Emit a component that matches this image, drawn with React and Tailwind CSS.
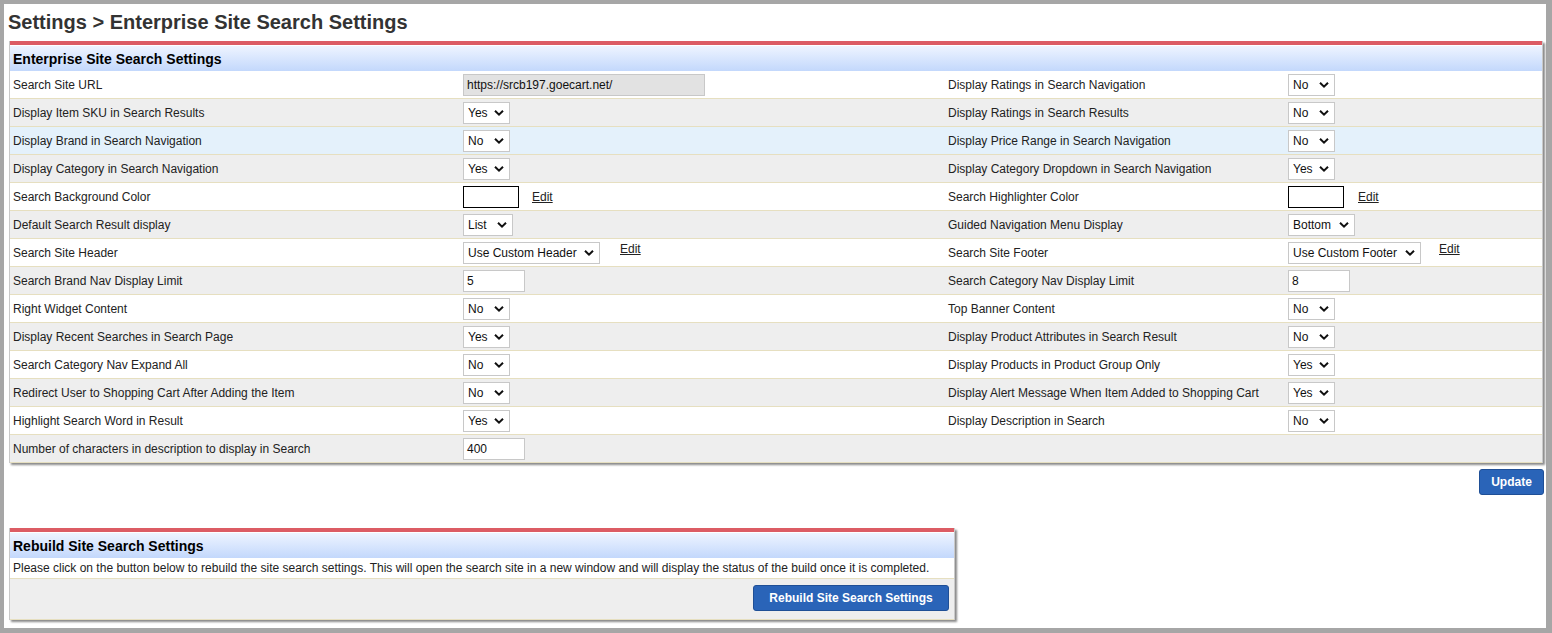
import React from "react";

const font = { fontFamily: '"Liberation Sans", Arial, sans-serif' };

function Chevron() {
  return (
    <svg width="10" height="7" viewBox="0 0 10 7" className="pointer-events-none absolute right-[5px] top-1/2 -translate-y-1/2">
      <path d="M1 1.2 L5 5.2 L9 1.2" fill="none" stroke="#111" strokeWidth="2" />
    </svg>
  );
}

function Sel({ value, w }) {
  return (
    <div className={`relative h-[22px] border border-[#c8c8c8] bg-white ${w}`}>
      <div className="pl-[4px] text-[12px] leading-[20px] text-[#111]">{value}</div>
      <Chevron />
    </div>
  );
}

function Txt({ value, w, gray }) {
  return (
    <div className={`h-[22px] border border-[#c8c8c8] pl-[3px] text-[12px] leading-[20px] text-[#111] ${gray ? "bg-[#e2e2e2]" : "bg-white"} ${w}`}>
      {value}
    </div>
  );
}

function Color({ gap }) {
  return (
    <div className="flex items-center">
      <div className="h-[22px] w-[56px] border border-black bg-white" />
      <a className={`${gap} text-[12px] text-[#222] underline`}>Edit</a>
    </div>
  );
}

function SelEdit({ value, w, gap }) {
  return (
    <div className="flex items-start">
      <Sel value={value} w={w} />
      <a className={`${gap} -mt-[1px] text-[12px] leading-[16px] text-[#222] underline`}>Edit</a>
    </div>
  );
}

const yes = <Sel value="Yes" w="w-[47px]" />;
const no = <Sel value="No" w="w-[47px]" />;

const rows = [
  ["Search Site URL", <Txt value="https://srcb197.goecart.net/" w="w-[242px]" gray />, "Display Ratings in Search Navigation", no],
  ["Display Item SKU in Search Results", yes, "Display Ratings in Search Results", no],
  ["Display Brand in Search Navigation", no, "Display Price Range in Search Navigation", no],
  ["Display Category in Search Navigation", yes, "Display Category Dropdown in Search Navigation", yes],
  ["Search Background Color", <Color gap="ml-[13px]" />, "Search Highlighter Color", <Color gap="ml-[14px]" />],
  ["Default Search Result display", <Sel value="List" w="w-[50px]" />, "Guided Navigation Menu Display", <Sel value="Bottom" w="w-[67px]" />],
  ["Search Site Header", <SelEdit value="Use Custom Header" w="w-[137px]" gap="ml-[20px]" />, "Search Site Footer", <SelEdit value="Use Custom Footer" w="w-[133px]" gap="ml-[18px]" />],
  ["Search Brand Nav Display Limit", <Txt value="5" w="w-[62px]" />, "Search Category Nav Display Limit", <Txt value="8" w="w-[62px]" />],
  ["Right Widget Content", no, "Top Banner Content", no],
  ["Display Recent Searches in Search Page", yes, "Display Product Attributes in Search Result", no],
  ["Search Category Nav Expand All", no, "Display Products in Product Group Only", yes],
  ["Redirect User to Shopping Cart After Adding the Item", no, "Display Alert Message When Item Added to Shopping Cart", yes],
  ["Highlight Search Word in Result", yes, "Display Description in Search", no],
  ["Number of characters in description to display in Search", <Txt value="400" w="w-[62px]" />, "", null],
];

function rowBg(i) {
  if (i === 2) return "bg-[#e4f1fb]";
  return i % 2 === 0 ? "bg-white" : "bg-[#eeeeee]";
}

function PanelHeader({ title }) {
  return (
    <>
      <div className="h-[4px] bg-[#dc5c64]" />
      <div className="h-[26px] border-t border-white bg-gradient-to-b from-[#eef4ff] to-[#c3d8fc] pl-[3px] text-[14px] font-bold leading-[26px] text-black">
        {title}
      </div>
    </>
  );
}

export default function App() {
  return (
    <div style={font} className="h-[633px] w-[1552px] bg-[#a6a6a6] pt-[4px] pl-[4px] pr-[6px] pb-[5px]">
      <div className="h-full bg-white">
        <div className="pl-[4px] pt-[7px] text-[20px] font-bold leading-[23px] text-[#333]">
          Settings &gt; Enterprise Site Search Settings
        </div>
        <div className="ml-[5px] mr-[3px] mt-[7px] border-x border-[#c9c9c9] shadow-[2px_2px_2px_#8a8a8a]">
          <PanelHeader title="Enterprise Site Search Settings" />
          {rows.map((r, i) => (
            <div
              key={i}
              className={`grid h-[28px] grid-cols-[453px_485px_340px_1fr] items-center border-b border-[#e6dfc0] text-[12px] text-[#222] ${rowBg(i)}`}
            >
              <div className="pl-[3px]">{r[0]}</div>
              <div>{r[1]}</div>
              <div>{r[2]}</div>
              <div>{r[3]}</div>
            </div>
          ))}
        </div>
        <div className="mt-[6px] flex justify-end pr-[2px]">
          <button className="h-[26px] w-[65px] rounded-[3px] border border-[#1f4f96] bg-[#2a64b8] text-[12px] font-bold text-white">
            Update
          </button>
        </div>
        <div className="ml-[5px] mt-[33px] w-[946px] border-x border-[#c9c9c9] shadow-[2px_2px_2px_#8a8a8a]">
          <PanelHeader title="Rebuild Site Search Settings" />
          <div className="h-[21px] border-b border-[#e6dfc0] bg-white pl-[3px] text-[12px] leading-[20px] text-[#222]">
            Please click on the button below to rebuild the site search settings. This will open the search site in a new window and will display the status of the build once it is completed.
          </div>
          <div className="flex h-[41px] items-start justify-end border-b border-[#e6dfc0] bg-[#eeeeee] pr-[5px] pt-[6px]">
            <button className="h-[26px] w-[196px] rounded-[3px] border border-[#1f4f96] bg-[#2a64b8] text-[12px] font-bold text-white">
              Rebuild Site Search Settings
            </button>
          </div>
        </div>
      </div>
    </div>
  );
}
